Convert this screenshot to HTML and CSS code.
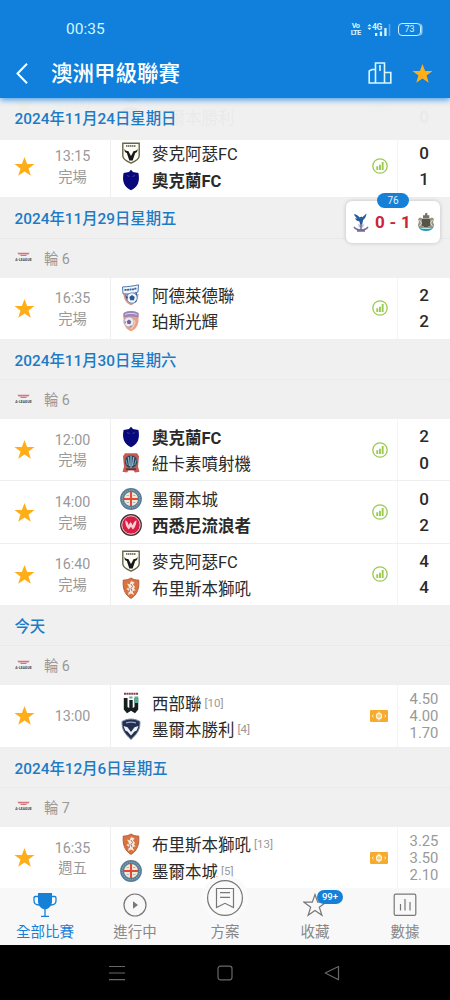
FILE: index.html
```html
<!DOCTYPE html>
<html lang="zh-Hant">
<head>
  <meta charset="UTF-8">
  <title>澳洲甲級聯賽</title>
  <link rel="stylesheet" href="styles.css">
</head>
<body>

<svg class="sprite" aria-hidden="true">
  <symbol id="star" viewBox="0 0 24 24">
    <path d="M12 1l3 8h8.500l-6.900 5.200 2.600 8.500L12 17.600l-7.200 5.100 2.600-8.500L.5 9H9z"/>
  </symbol>
  <symbol id="stats" viewBox="0 0 16 16">
    <circle cx="8" cy="8" r="7.200" fill="none" stroke="#9aca4f" stroke-width="1.300"/>
    <path d="M4.300 8.300h1.900v3.700H4.300zM7 6.800h1.900V12H7zM9.700 4h1.900v8H9.700z" fill="#9aca4f"/>
  </symbol>
  <symbol id="odds" viewBox="0 0 18 12">
    <rect width="18" height="12" rx="1.200" fill="#f6ab2c"/>
    <ellipse cx="9" cy="6" rx="2.400" ry="2.800" fill="none" stroke="#fff3dc" stroke-width="1.500"/>
    <path d="M9 1.500v9M3.500 4.700L2.200 6l1.300 1.300M14.500 4.700L15.800 6l-1.300 1.300" fill="none" stroke="#fff3dc" stroke-width="1"/>
  </symbol>
  <symbol id="league" viewBox="0 0 17 10">
    <path d="M2.500.8h12l-1 1.700h-10zM5 3.100h7l-1 1H6z" fill="#d5767c"/>
    <text x=".3" y="8.800" font-size="3.800" font-weight="700" textLength="16.400" lengthAdjust="spacingAndGlyphs" fill="#444">A-LEAGUE</text>
  </symbol>

  <symbol id="macarthur" viewBox="0 0 22 22">
    <path d="M2.800 1.200h16.400v12.500c0 3.300-4 5.600-8.200 7.500-4.200-1.900-8.200-4.200-8.200-7.500z" fill="#fffff4" stroke="#66664a" stroke-width="1.400"/>
    <path d="M6 4h10" stroke="#555" stroke-width="1.400" stroke-dasharray="1.500 .5"/>
    <path d="M4.700 6.500c.2 2.500 1.800 2.300 3.600 2.500L11 14l2.700-5c1.800-.2 3.400 0 3.600-2.500.8 2.600-.4 4.200-2.100 4.500L12.700 18.500H9.300L6.800 11c-1.700-.3-2.900-1.900-2.100-4.500z" fill="#191919"/>
  </symbol>
  <symbol id="auckland" viewBox="0 0 22 22">
    <path d="M11 .7l2 2.200 5.400 1.200c.8 3.800.8 7.700-.5 10.700-1.300 2.800-3.700 5-6.900 6.500-3.200-1.500-5.600-3.700-6.900-6.500-1.300-3-1.300-6.900-.5-10.700L9 2.900z" fill="#08087c"/>
    <path d="M7 6.500l2.500 1M15 6.500l-2.500 1" stroke="#5554a8" stroke-width=".7" fill="none"/>
  </symbol>
  <symbol id="adelaide" viewBox="0 0 22 22">
    <path d="M3.500 10h15c0 5.500-3 9.500-7.500 11.300C6.500 19.500 3.500 15.500 3.500 10z" fill="#d9958a"/>
    <path d="M2.500 3C8 2.600 14 2 18.500.8L18 8c-5 1.700-10 2.200-15 1.800z" fill="#f2f6fb" stroke="#4c79ad" stroke-width="1"/>
    <path d="M4.500 5.800c4.500.1 8-.2 12-1.500" fill="none" stroke="#315f9c" stroke-width="1.800" stroke-dasharray="2 .5"/>
    <circle cx="12" cy="14" r="5.200" fill="#eef4fb" stroke="#5c85b8" stroke-width=".8"/>
    <path d="M12 11l2.800 2-1 3.200h-3.500l-1-3.200zM5 11l3 2-1 3zM16.500 15.500l-2 3 2-.5zM15 9.500l2 2V9z" fill="#285794"/>
  </symbol>
  <symbol id="perth" viewBox="0 0 22 22">
    <path d="M3.500 3C8 .3 14 .3 18.500 3v7c0 5.500-3 9.500-7.500 11.300C6.500 19.500 3.500 15.500 3.500 10z" fill="#e7a184"/>
    <path d="M3.500 3C8 .3 14 .3 18.500 3v4.500c-5-1.200-10-1.200-15 0z" fill="#9987bb"/>
    <path d="M5 4.500c4-1.500 8-1.500 12 0" fill="none" stroke="#dbd1ea" stroke-width="1"/>
    <circle cx="9" cy="12" r="5" fill="#eeeaf4" stroke="#aaa0bd" stroke-width=".7"/>
    <path d="M9 9.500l2.300 1.700-.9 2.800H7.600l-.9-2.800zM4.500 11l1.500 1-1 2zM9 16.500l2-1 1 1z" fill="#716391"/>
    <path d="M14 10c2 2 0 6-3 9" fill="none" stroke="#f8cdb5" stroke-width="1.300"/>
  </symbol>
  <symbol id="newcastle-jets" viewBox="0 0 22 22">
    <path d="M5 1.200h12l2 3-1 10.500 1.500 5-4.500.8-1.500-2h-5l-1.500 2-4.500-.8L4 14.700 3 4.200z" fill="#c45b52"/>
    <circle cx="11" cy="9.500" r="6.300" fill="#29475c"/>
    <path d="M8.300 5l1.200 9M13.700 5l-1.200 9M11 3.500V16" stroke="#8fb4ca" stroke-width="1.300"/>
    <path d="M5.800 7.500l1.500 5.500M16.200 7.500L14.700 13" stroke="#76a7c0" stroke-width="1"/>
    <path d="M6 17.200h10" stroke="#3e3c4d" stroke-width="1.600"/>
  </symbol>
  <symbol id="melbourne-city" viewBox="0 0 22 22">
    <circle cx="11" cy="11" r="10.900" fill="#587b94"/>
    <circle cx="11" cy="11" r="8.800" fill="none" stroke="#8ba7ba" stroke-width="1.200" stroke-dasharray="1.300 1"/>
    <circle cx="11" cy="11" r="7" fill="#f4ead3"/>
    <path d="M11 4v14M4 11h14" stroke="#dc4b3e" stroke-width="2.100"/>
    <path d="M6.500 7.500h2.500M13 7.500h2.500M6.500 14.500h2.500M13 14.500h2.500" stroke="#a7bbca" stroke-width="1.200"/>
  </symbol>
  <symbol id="wanderers" viewBox="0 0 22 22">
    <circle cx="11" cy="11" r="10.900" fill="#402c35"/>
    <circle cx="11" cy="11" r="9.200" fill="#d91e43" stroke="#f6ccd3" stroke-width="1"/>
    <path d="M5.300 6.500c2 .3 2.600 2.200 3.200 4.500l2.200-3 2 3.300c.8-2.500 1.700-4.300 3.800-4.800-.3 3.700-1 6.900-3.700 9L11 12.800l-2.300 2.700C6 13 5.300 10 5.300 6.500z" fill="#f9cdd3"/>
  </symbol>
  <symbol id="brisbane" viewBox="0 0 22 22">
    <path d="M3.300 3C6 3.200 8.500 2.500 11 1c2.500 1.500 5 2.200 7.700 2 .8 7.500-1 14.500-7.700 18.400C4.300 17.500 2.500 10.500 3.300 3z" fill="#dd733c" stroke="#ad583b" stroke-width=".9"/>
    <path d="M11 4l3.500 1.500-1.500 2 2 2.500-1 1.500 1.500 2-3 .5L14 18l-3-1.500L8 18l1-4-2.500-2L9 10 7 6.500l2.500 1z" fill="#f7ebe2"/>
    <path d="M11 7l1.500 2.500-1.500 2 1 2.500M8.500 10.500l1.200 2-.7 2.500" fill="none" stroke="#7d6664" stroke-width=".8"/>
  </symbol>
  <symbol id="western" viewBox="0 0 22 22">
    <path d="M4 1.700h14.500" stroke="#86444b" stroke-width="2" stroke-dasharray="2 .4"/>
    <path d="M3.800 6H7.500v9l1.800 1V8h3.400v8l1.800-1V6h3.700v11.500L15 21.300l-4-2.500-4 2.500-3.200-3.800z" fill="#151d1d"/>
    <path d="M9.300 4.500h3.200v2H9.300zM14.500 4.500h3.700v6.500h-3.700z" fill="#54ae96"/>
  </symbol>
  <symbol id="victory" viewBox="0 0 22 22">
    <path d="M2 3.500C8 .2 14 .2 20 3.500c0 7.500-1.500 11-9 18-7.500-7-9-10.500-9-18z" fill="#213052" stroke="#7d879e" stroke-width="1"/>
    <path d="M3.500 8l4 1.200L11 14l3.500-4.800 4-1.200-1.800 4.500-2.200 1L11 17.500l-3.500-4-2.200-1z" fill="#eef1f5"/>
    <path d="M6 4.800c3.500-1 6.500-1 10 0" stroke="#9da8be" stroke-width="1.300" fill="none"/>
  </symbol>
  <symbol id="palace" viewBox="0 0 16 19">
    <path d="M1 1c2.500.5 4.300 1.700 5.600 3.400l1.700-.8 1 .7L13.500.5c-.2 3-1.400 5-3.300 6.500L9 12H7.200L6.500 8.500C4 8 2.200 6.800 2.300 5.300l2.300.3C2.800 4.400 1.500 3 1 1z" fill="#285b9a"/>
    <path d="M5 11c2 1 4 1 6 0l-1 3.500H6z" fill="#b8bed0"/>
    <path d="M1 14c2 2.700 4.400 3 7 3s5-.3 7-3M8 12v6M4 18h8" fill="none" stroke="#766c97" stroke-width="1.500"/>
  </symbol>
  <symbol id="newcastle-utd" viewBox="0 0 18 20">
    <path d="M6 6.500V3.300h2V1.500l2.300-.8v2.600h2v3.200z" fill="#777269"/>
    <path d="M1 7l2-1.500 2.500 1h7l2.500-1L17 7l-1 3 1.200 3-1.200 3H2L.8 13 2 10z" fill="#9b9382"/>
    <path d="M6 7v7M8 7v8M10 7v8M12 7v7" stroke="#292929" stroke-width="1.200"/>
    <path d="M2.500 8l2 3-2 3M15.500 8l-2 3 2 3" fill="none" stroke="#dedbd0" stroke-width="1"/>
    <path d="M1.500 15.300c2.500 2 12.500 2 15 0-1 2.300-3.700 3.700-7.500 3.700s-6.500-1.400-7.500-3.700z" fill="#1b9ead"/>
  </symbol>
</svg>

<div class="screen">
  <header class="header">
    <div class="statusbar">
      <span class="clock">00:35</span>
      <span class="volte"><b>Vo</b><b>LTE</b></span>
      <span class="signal">
        <svg width="5" height="8" viewBox="0 0 5 8"><path d="M.5 3.200L2.500 1l2 2.200zM.5 4.800L2.500 7l2-2.200z" fill="#d5f6ff"/></svg>
        <b>4G</b>
        <svg class="bars" width="17" height="13" viewBox="0 0 17 13"><path d="M0 10h2.300v3H0zM4.800 8.500h2.300V13H4.800zM9.300 5h2.300v8H9.300z" fill="#d5f6ff"/><path d="M14.500 1v12" stroke="#58a9e8" stroke-width="1.500"/></svg>
      </span>
      <span class="battery">73</span>
    </div>
    <div class="titlebar">
      <svg class="back" width="12" height="21" viewBox="0 0 12 21"><path d="M11 .8L1.500 10.500 11 20.200" fill="none" stroke="#fff" stroke-width="2"/></svg>
      <h1>澳洲甲級聯賽</h1>
      <svg class="podium" width="24" height="22" viewBox="0 0 24 22"><path d="M7.500 21V1h9v20M7.500 7.500H4L1.200 9v12h21.600V10.500h-6.300M1 21h22M11 4.500l1-.5v5" fill="none" stroke="#d8f7ff" stroke-width="1.600"/></svg>
      <svg class="star" width="21" height="21"><use href="#star"/></svg>
    </div>
  </header>

  <div class="sticky-date">2024年11月24日星期日</div>

  <main class="list">
    <div class="match">
      <svg class="star"><use href="#star"/></svg>
      <div class="time"><span>11:00</span></div>
      <div class="teams">
        <div class="team"><svg><use href="#wanderers"/></svg>西悉尼流浪者</div>
        <div class="team"><svg><use href="#victory"/></svg>墨爾本勝利</div>
      </div>
      <svg class="stats"><use href="#stats"/></svg>
      <div class="score"><span>0</span><span>0</span></div>
    </div>
    <div class="match">
      <svg class="star"><use href="#star"/></svg>
      <div class="time"><span>13:15</span><span>完場</span></div>
      <div class="teams">
        <div class="team"><svg><use href="#macarthur"/></svg>麥克阿瑟FC</div>
        <div class="team win"><svg><use href="#auckland"/></svg>奧克蘭FC</div>
      </div>
      <svg class="stats"><use href="#stats"/></svg>
      <div class="score"><span>0</span><span>1</span></div>
    </div>

    <h2 class="date">2024年11月29日星期五</h2>
    <div class="round"><svg><use href="#league"/></svg>輪 6</div>
    <div class="match">
      <svg class="star"><use href="#star"/></svg>
      <div class="time"><span>16:35</span><span>完場</span></div>
      <div class="teams">
        <div class="team"><svg><use href="#adelaide"/></svg>阿德萊德聯</div>
        <div class="team"><svg><use href="#perth"/></svg>珀斯光輝</div>
      </div>
      <svg class="stats"><use href="#stats"/></svg>
      <div class="score"><span>2</span><span>2</span></div>
    </div>

    <h2 class="date">2024年11月30日星期六</h2>
    <div class="round"><svg><use href="#league"/></svg>輪 6</div>
    <div class="match">
      <svg class="star"><use href="#star"/></svg>
      <div class="time"><span>12:00</span><span>完場</span></div>
      <div class="teams">
        <div class="team win"><svg><use href="#auckland"/></svg>奧克蘭FC</div>
        <div class="team"><svg><use href="#newcastle-jets"/></svg>紐卡素噴射機</div>
      </div>
      <svg class="stats"><use href="#stats"/></svg>
      <div class="score"><span>2</span><span>0</span></div>
    </div>
    <div class="match">
      <svg class="star"><use href="#star"/></svg>
      <div class="time"><span>14:00</span><span>完場</span></div>
      <div class="teams">
        <div class="team"><svg><use href="#melbourne-city"/></svg>墨爾本城</div>
        <div class="team win"><svg><use href="#wanderers"/></svg>西悉尼流浪者</div>
      </div>
      <svg class="stats"><use href="#stats"/></svg>
      <div class="score"><span>0</span><span>2</span></div>
    </div>
    <div class="match">
      <svg class="star"><use href="#star"/></svg>
      <div class="time"><span>16:40</span><span>完場</span></div>
      <div class="teams">
        <div class="team"><svg><use href="#macarthur"/></svg>麥克阿瑟FC</div>
        <div class="team"><svg><use href="#brisbane"/></svg>布里斯本獅吼</div>
      </div>
      <svg class="stats"><use href="#stats"/></svg>
      <div class="score"><span>4</span><span>4</span></div>
    </div>

    <h2 class="date">今天</h2>
    <div class="round"><svg><use href="#league"/></svg>輪 6</div>
    <div class="match">
      <svg class="star"><use href="#star"/></svg>
      <div class="time"><span>13:00</span></div>
      <div class="teams">
        <div class="team"><svg><use href="#western"/></svg>西部聯<small>[10]</small></div>
        <div class="team"><svg><use href="#victory"/></svg>墨爾本勝利<small>[4]</small></div>
      </div>
      <svg class="money"><use href="#odds"/></svg>
      <div class="odds"><span>4.50</span><span>4.00</span><span>1.70</span></div>
    </div>

    <h2 class="date">2024年12月6日星期五</h2>
    <div class="round"><svg><use href="#league"/></svg>輪 7</div>
    <div class="match">
      <svg class="star"><use href="#star"/></svg>
      <div class="time"><span>16:35</span><span>週五</span></div>
      <div class="teams">
        <div class="team"><svg><use href="#brisbane"/></svg>布里斯本獅吼<small>[13]</small></div>
        <div class="team"><svg><use href="#melbourne-city"/></svg>墨爾本城<small>[5]</small></div>
      </div>
      <svg class="money"><use href="#odds"/></svg>
      <div class="odds"><span>3.25</span><span>3.50</span><span>2.10</span></div>
    </div>
  </main>

  <!-- floating live score -->
  <div class="live">
    <span class="minute">76</span>
    <svg width="16" height="19"><use href="#palace"/></svg>
    <strong>0 - 1</strong>
    <svg width="18" height="20"><use href="#newcastle-utd"/></svg>
  </div>

  <nav class="tabs">
    <a class="tab active">
      <svg width="24" height="26" viewBox="0 0 24 26"><path d="M5 1h14v8c0 4.500-2.500 7.500-7 8.500C7.500 16.500 5 13.500 5 9z" fill="#1580d8"/><path d="M5 4.500H2.300c-1 0-1.300.6-1.300 1.500v2.500C1 11.500 3 13 6 13M19 4.500h2.700c1 0 1.300.6 1.300 1.500v2.500c0 3-2 4.500-5 4.500M12 17v7M8 24.300h8" fill="none" stroke="#1580d8" stroke-width="1.300"/></svg>
      全部比賽
    </a>
    <a class="tab">
      <svg width="24" height="26" viewBox="0 0 24 26"><circle cx="12" cy="13" r="11" fill="none" stroke="#777" stroke-width="1.200"/><path d="M10 9.300l5 3.700-5 3.700z" fill="#777"/></svg>
      進行中
    </a>
    <a class="tab plan">
      <span class="bump">
        <svg width="38" height="38" viewBox="0 0 38 38"><circle cx="19" cy="19" r="17.400" fill="none" stroke="#777" stroke-width="1.200"/><path d="M10.500 9.500h17v19L19 24.300l-8.500 4.200zM14 13.700h10M14 18.300h10" fill="none" stroke="#777" stroke-width="1.200"/></svg>
      </span>
      方案
    </a>
    <a class="tab">
      <svg width="24" height="26" viewBox="0 0 24 26"><path d="M12 2.500l2.700 7.700H23l-6.700 5 2.600 8.100L12 18.500l-6.900 4.800 2.600-8.100-6.700-5h8.300z" fill="none" stroke="#777" stroke-width="1.200"/></svg>
      <span class="count">99+</span>
      收藏
    </a>
    <a class="tab">
      <svg width="24" height="26" viewBox="0 0 24 26"><rect x="1.200" y="2.200" width="21.600" height="21.200" rx="1.500" fill="none" stroke="#777" stroke-width="1.200"/><path d="M7.500 12v6.500M12 7v11.500M17 10v8.500" stroke="#777" stroke-width="1.200"/></svg>
      數據
    </a>
  </nav>

  <div class="system">
    <svg width="16" height="16" viewBox="0 0 16 16"><path d="M0 1.500h16M0 8h16M0 14.700h16"/></svg>
    <svg width="16" height="16" viewBox="0 0 16 16"><rect x="1" y="1.200" width="14" height="13.600" rx="2.500"/></svg>
    <svg width="16" height="16" viewBox="0 0 16 16"><path d="M14.500 1.500v13.200L1.200 8z" stroke-linejoin="round"/></svg>
  </div>
</div>

</body>
</html>
```

FILE: styles.css
```css
* {
  box-sizing: border-box;
}

body {
  margin: 0;
  font-family: Roboto, "Noto Sans CJK TC", sans-serif;
  color: #2a2a2a;
}

.sprite {
  position: absolute;
  width: 0;
  height: 0;
}

.screen {
  position: relative;
  display: flex;
  flex-direction: column;
  width: 450px;
  height: 1000px;
  overflow: hidden;
}

.header {
  flex: none;
  height: 98px;
  background: #1080dc;
  color: #fff;
  box-shadow: 0 2px 6px #4ba0e6;
  position: relative;
  z-index: 3;
}

.statusbar {
  display: flex;
  align-items: center;
  height: 58px;
  padding: 0 29px 0 66px;
  color: #d5f6ff;
}

.clock {
  font-size: 15.500px;
  margin-right: auto;
}

.volte {
  display: flex;
  flex-direction: column;
  align-items: center;
  width: 9px;
  font-size: 7.500px;
  line-height: 7px;
  letter-spacing: -0.800px;
  margin-right: 7px;
}

.signal {
  display: flex;
  align-items: flex-start;
  width: 24px;
  height: 13px;
  margin-right: 7px;
}

.signal b {
  font-size: 8.500px;
  line-height: 8px;
  letter-spacing: -0.500px;
}

.signal svg {
  flex: none;
}

.signal .bars {
  margin-left: -7px;
}

.battery {
  width: 23px;
  height: 13px;
  border: 1.500px solid #c9f0ff;
  border-radius: 4px;
  font-size: 9px;
  line-height: 11px;
  text-align: center;
  box-shadow: 2px 0 0 -0.500px #8fc9f2;
}

.titlebar {
  display: flex;
  align-items: center;
  height: 30px;
  padding: 0 17px 0 16px;
}

.titlebar h1 {
  margin: 0 auto 0 23px;
  font-size: 21.500px;
  font-weight: 500;
  line-height: 30px;
  padding-top: 2px;
}

.podium {
  margin-right: 20px;
}

.star {
  fill: #ffae18;
}

.sticky-date {
  position: absolute;
  top: 98px;
  left: 0;
  right: 0;
  height: 41.500px;
  padding-left: 14.500px;
  font-size: 15.350px;
  font-weight: 500;
  line-height: 43.500px;
  color: #1c7bc7;
  background: rgba(240, 240, 240, 0.97);
  z-index: 2;
}

/* list scrolls under the header */
.list {
  height: 814.400px;
  margin: -24.400px 0 -25px;
  overflow: hidden;
  flex: none;
}

.date {
  height: 40.400px;
  margin: 0;
  padding-left: 14.500px;
  border-bottom: 1px solid #e9e9e9;
  font-size: 15.350px;
  font-weight: 500;
  line-height: 42.500px;
  color: #1c7bc7;
  background: #f0f0f0;
}

.round {
  display: flex;
  align-items: center;
  gap: 12.500px;
  height: 39px;
  padding: 0 0 2px 14.500px;
  font-size: 14.300px;
  color: #999;
  background: #f0f0f0;
}

.round svg {
  width: 17px;
  height: 10px;
}

.match {
  display: grid;
  grid-template-columns: 35px 75px 1fr 34px 53px;
  align-items: center;
  height: 62.250px;
  background: #fff;
  border-bottom: 1px solid #efefef;
}

.match .star {
  width: 21px;
  height: 21px;
  margin-left: 13.500px;
}

.time {
  display: flex;
  flex-direction: column;
  align-items: center;
  font-size: 14.300px;
  line-height: 20.500px;
  padding-top: 1px;
  color: #999;
}

.teams,
.score,
.odds {
  height: 100%;
  display: flex;
  flex-direction: column;
  justify-content: center;
}

.teams {
  padding-left: 9px;
  border-left: 1px solid #efefef;
}

.team {
  display: flex;
  align-items: center;
  height: 26.500px;
  font-size: 16.500px;
  white-space: nowrap;
}

.team svg {
  width: 22px;
  height: 22px;
  margin-right: 10px;
}

.team small {
  margin-left: 3px;
  font-size: 11.500px;
  color: #999;
}

.win {
  font-weight: 700;
}

.stats {
  width: 16px;
  height: 16px;
  margin-left: 9px;
}

.money {
  width: 18px;
  height: 12px;
  margin-left: 7px;
}

.score,
.odds {
  align-items: center;
  border-left: 1px solid #f5f5f5;
}

.score {
  font-size: 17px;
  font-weight: 500;
  line-height: 26.500px;
}

.odds {
  font-size: 14.800px;
  line-height: 17px;
  padding-top: 1px;
  color: #999;
}

.live {
  position: absolute;
  top: 201px;
  left: 346px;
  width: 94px;
  height: 42px;
  display: flex;
  align-items: center;
  justify-content: space-between;
  padding: 0 5px 0 7px;
  background: #fff;
  border-radius: 6px;
  box-shadow: 0 0 4px rgba(0, 0, 0, 0.2);
  z-index: 2;
}

.live strong {
  font-size: 17px;
  font-weight: 700;
  color: #cc2438;
  letter-spacing: 0.300px;
}

.minute {
  position: absolute;
  top: -8px;
  left: 31px;
  width: 32px;
  height: 15px;
  border-radius: 8px;
  background: #1580d8;
  color: #e6f5ff;
  font-size: 10px;
  line-height: 15px;
  text-align: center;
}

.tabs {
  position: relative;
  flex: none;
  display: grid;
  grid-template-columns: repeat(5, 1fr);
  height: 57px;
  margin-top: 25px;
  background: #f8f8f8;
  z-index: 1;
}

.tab {
  position: relative;
  display: flex;
  flex-direction: column;
  align-items: center;
  padding-top: 4px;
  font-size: 14.500px;
  line-height: 29px;
  color: #888;
}

.tab > svg {
  flex: none;
}

.active {
  color: #1580d8;
}

.bump {
  display: flex;
  align-items: center;
  justify-content: center;
  flex: none;
  width: 46px;
  height: 46px;
  margin-top: -17.500px;
  margin-bottom: -2.500px;
  border-radius: 50%;
  background: #fafafa;
}

.count {
  position: absolute;
  top: 2px;
  left: 47px;
  width: 26px;
  height: 14px;
  border-radius: 7px;
  background: #1580d8;
  color: #fff;
  font-size: 9.500px;
  font-weight: 500;
  line-height: 14px;
  text-align: center;
}

.system {
  flex: none;
  display: flex;
  justify-content: space-between;
  align-items: center;
  height: 55px;
  padding: 0 110px 0 109px;
  background: #000;
}

.system svg {
  fill: none;
  stroke: #686868;
  stroke-width: 1.200;
}
```
